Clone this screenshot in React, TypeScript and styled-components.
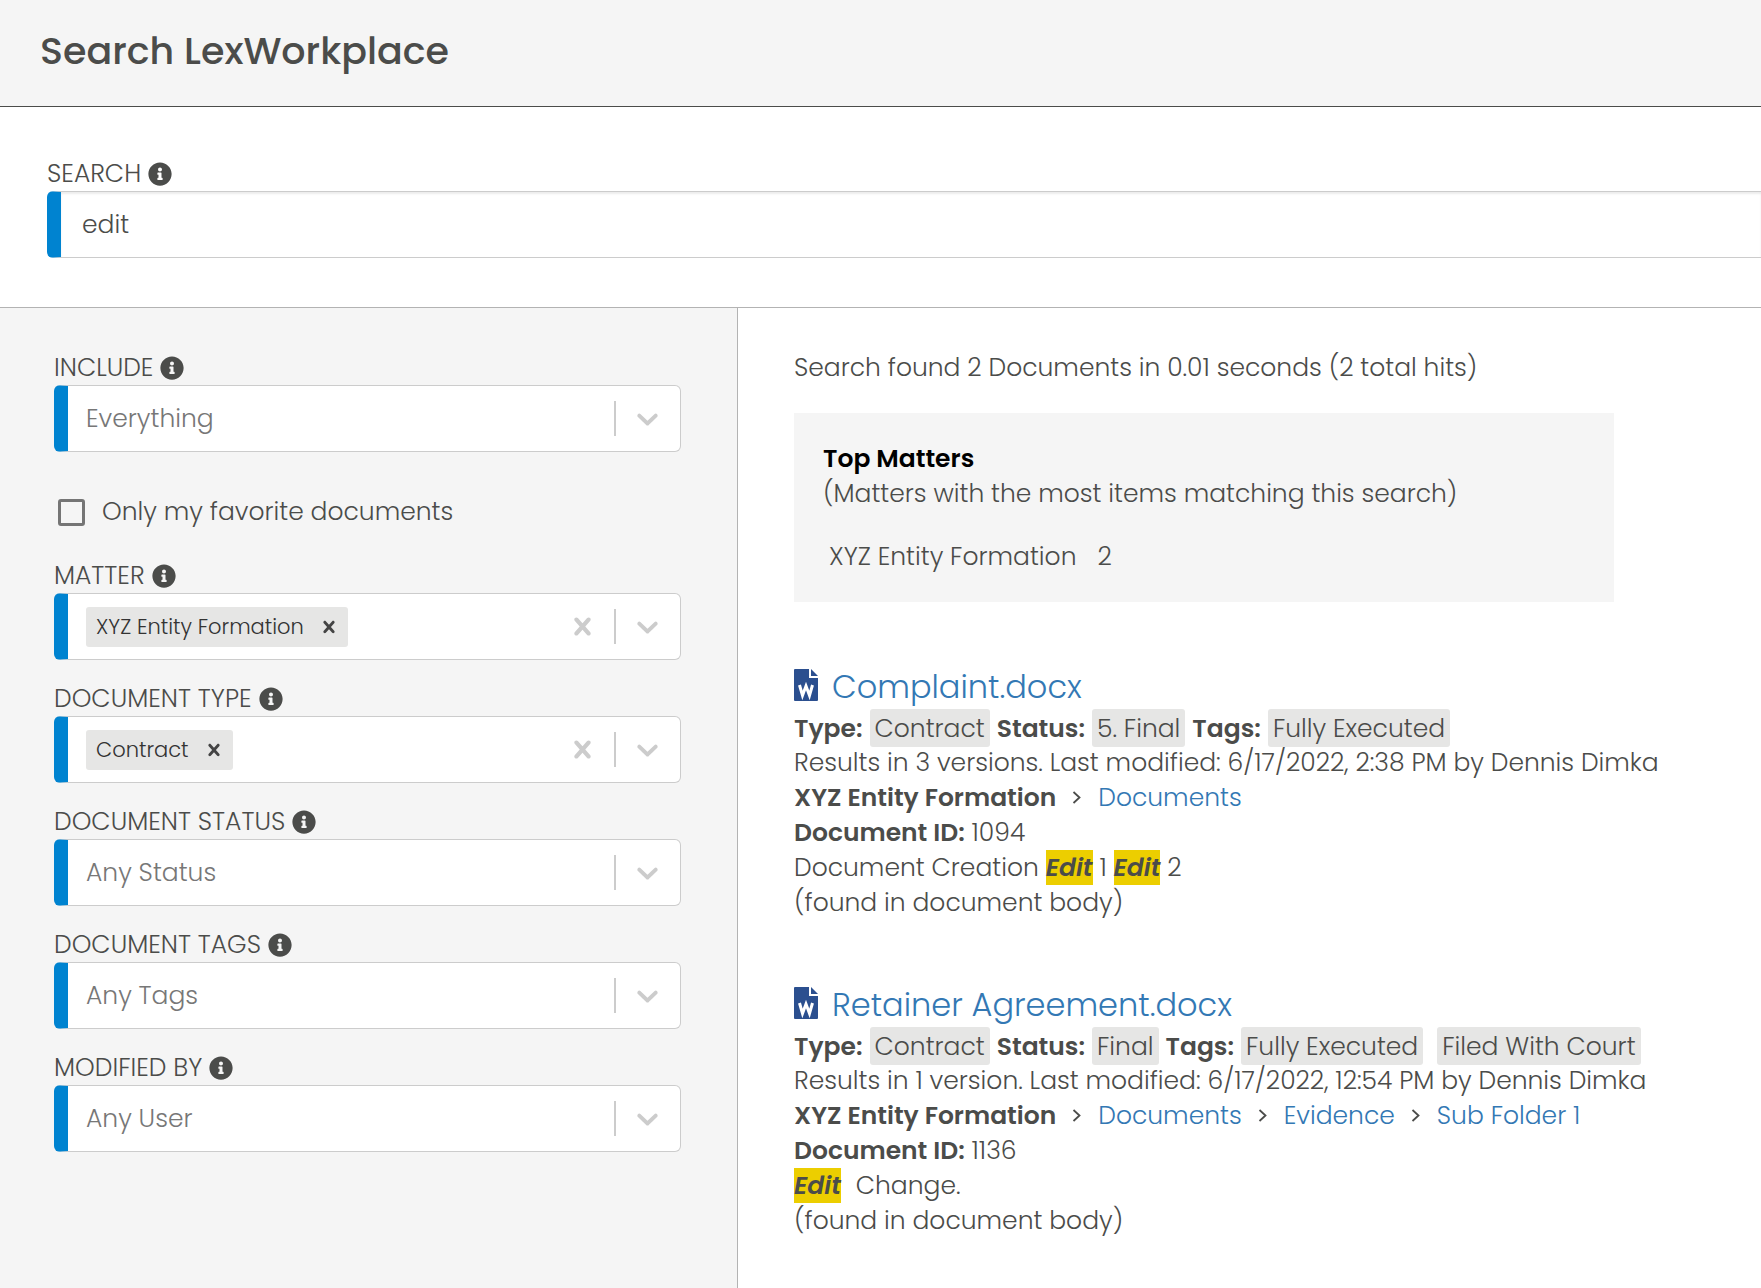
import React, { useState } from 'react';
import styled, { createGlobalStyle } from 'styled-components';
import { FaInfoCircle } from 'react-icons/fa';

const fonts = 'Poppins, Inter, "Open Sans", sans-serif';
const ink = '#4b4c4a';
const blue = '#0083d0';
const line = '#cccccc';
const panel = '#f5f5f5';
const chip = '#e6e6e5';
const link = '#3378b4';

const GlobalStyle = createGlobalStyle`
  *, *::before, *::after { box-sizing: border-box; }
  body {
    margin: 0;
    background: #ffffff;
    color: ${ink};
    font-family: ${fonts};
    font-size: 25px;
    font-weight: 300;
    line-height: 35px;
  }
  button, input, select { font: inherit; color: inherit; }
  b { font-weight: 600; }
`;

const Page = styled.div`
  display: flex;
  flex-direction: column;
  min-height: 100vh;
  overflow-x: hidden;
`;

const Header = styled.header`
  padding: 23px 40px 28px;
  background: ${panel};
  border-bottom: 1px solid ${ink};
`;

const PageTitle = styled.h1`
  margin: 0;
  font-size: 38px;
  line-height: 55px;
  font-weight: 500;
`;

const SearchBar = styled.section`
  padding: 49px 0 49px 47px;
  border-bottom: 1px solid #b3b3b3;
`;

const Label = styled.label`
  display: flex;
  align-items: center;
  gap: 7px;
  height: 35px;
  text-transform: uppercase;

  svg { font-size: 24px; }
`;

const SearchInput = styled.input`
  display: block;
  width: 100%;
  height: 67px;
  padding: 0 21px;
  border: 1px solid ${line};
  border-left: 14px solid ${blue};
  border-right: 0;
  border-radius: 6px 0 0 6px;
  box-shadow: inset 0 2px 2px rgba(0, 0, 0, 0.08);
  background: #ffffff;
  outline: 0;
`;

const Body = styled.div`
  display: grid;
  grid-template-columns: 738px 1fr;
  flex: 1;

  @media (max-width: 1100px) { grid-template-columns: 1fr; }
`;

const Filters = styled.aside`
  padding: 42px 56px 40px 54px;
  background: ${panel};
  border-right: 1px solid #b3b3b3;
`;

const Field = styled.div`
  margin-bottom: 21px;
`;

const Control = styled.div`
  display: grid;
  grid-template-columns: 1fr auto;
  align-items: center;
  height: 67px;
  padding-right: 1px;
  border: 1px solid ${line};
  border-left: 14px solid ${blue};
  border-radius: 6px;
  background: #ffffff;
`;

const Select = styled.select`
  grid-area: 1 / 1 / 2 / 3;
  height: 65px;
  padding: 0 80px 0 18px;
  border: 0;
  outline: 0;
  appearance: none;
  background: transparent;
  color: #777777;
`;

const Indicators = styled.div`
  grid-area: 1 / 2;
  display: flex;
  align-items: center;
  pointer-events: none;

  svg { fill: ${line}; display: block; }
`;

const Divider = styled.span`
  width: 2px;
  height: 35px;
  background: ${line};
`;

const ChevronBox = styled.span`
  padding: 0 14px;
`;

const ClearButton = styled.button`
  padding: 0 14px;
  border: 0;
  background: none;
  cursor: pointer;
  pointer-events: auto;
`;

const Values = styled.div`
  display: flex;
  align-items: center;
  min-width: 0;
  padding-left: 18px;
`;

const ValueChip = styled.span`
  display: flex;
  align-items: center;
  flex: none;
  height: 40px;
  padding: 0 7px 0 10px;
  gap: 13px;
  border-radius: 3px;
  background: ${chip};
  color: #333333;
  font-size: 21px;
`;

const RemoveButton = styled.button`
  display: flex;
  padding: 0;
  border: 0;
  background: none;
  cursor: pointer;

  svg { fill: #444444; }
`;

const ChipInput = styled.input`
  flex: 1;
  min-width: 0;
  border: 0;
  outline: 0;
  background: transparent;
`;

const CheckRow = styled.label`
  display: flex;
  align-items: center;
  gap: 17px;
  margin: 42px 0 29px;
  padding-left: 4px;
`;

const Checkbox = styled.input`
  appearance: none;
  width: 27px;
  height: 27px;
  margin: 2px 0 0;
  border: 3px solid #757575;
  border-radius: 3px;
  background: ${panel};

  &:checked { background: ${blue}; }
`;

const Results = styled.main`
  padding: 42px 40px 40px 56px;
`;

const Summary = styled.p`
  margin: 0 0 28px;
`;

const TopMatters = styled.section`
  max-width: 820px;
  margin-bottom: 62px;
  padding: 28px 29px;
  background: ${panel};
`;

const TopHeading = styled.h2`
  margin: 0;
  font-size: 25px;
  font-weight: 600;
  line-height: 35px;
  color: #000000;
`;

const MatterTable = styled.table`
  margin-top: 28px;
  border-spacing: 0;

  td { padding: 0 15px 0 6px; }
`;

const Result = styled.article`
  margin-bottom: 62px;
`;

const ResultTitle = styled.h3`
  display: flex;
  align-items: center;
  gap: 14px;
  margin: 0;
  font-size: 32px;
  font-weight: 300;
  line-height: 45px;

  svg { margin-bottom: 4px; }
`;

const Link = styled.a`
  color: ${link};
  text-decoration: none;
`;

const MetaRow = styled.div`
  display: flex;
  flex-wrap: wrap;
  align-items: center;
  gap: 7px;
  margin-bottom: -2px;
`;

const Tag = styled.span<{ $spaced?: boolean }>`
  height: 38px;
  margin-left: ${(p) => (p.$spaced ? '7px' : '0')};
  padding: 2px 5px 1px;
  border-radius: 3px;
  background: ${chip};
`;

const Crumbs = styled.nav`
  display: flex;
  flex-wrap: wrap;
  align-items: center;
  gap: 16px;
`;

const Mark = styled.mark`
  display: inline-block;
  background: #ecce00;
  color: inherit;
  font-style: italic;
  font-weight: 600;
`;

const Gap = styled.span`
  padding-left: 8px;
`;

const Cross = ({ size }: { size: number }) => (
  <svg width={size} height={size} viewBox="0 0 20 20" aria-hidden="true">
    <path d="M14.348 14.849c-0.469 0.469-1.229 0.469-1.697 0l-2.651-3.030-2.651 3.029c-0.469 0.469-1.229 0.469-1.697 0-0.469-0.469-0.469-1.229 0-1.697l2.758-3.15-2.759-3.152c-0.469-0.469-0.469-1.228 0-1.697s1.228-0.469 1.697 0l2.652 3.031 2.651-3.031c0.469-0.469 1.228-0.469 1.697 0s0.469 1.229 0 1.697l-2.758 3.152 2.758 3.15c0.469 0.469 0.469 1.229 0 1.698z" />
  </svg>
);

const Chevron = () => (
  <svg width="35" height="35" viewBox="0 0 20 20" aria-hidden="true">
    <path d="M4.516 7.548c0.436-0.446 1.043-0.481 1.576 0l3.908 3.747 3.908-3.747c0.533-0.481 1.141-0.446 1.574 0 0.436 0.445 0.408 1.197 0 1.615-0.406 0.418-4.695 4.502-4.695 4.502-0.217 0.223-0.502 0.335-0.787 0.335s-0.57-0.112-0.789-0.335c0 0-4.287-4.084-4.695-4.502s-0.436-1.17 0-1.615z" />
  </svg>
);

const CrumbArrow = () => (
  <svg width="10" height="14" viewBox="0 0 10 14" aria-hidden="true">
    <path fill="none" stroke={ink} strokeWidth="1.8" d="M1.500 1l6 5.500-6 5.500" />
  </svg>
);

const WordFile = () => (
  <svg width="24" height="32" viewBox="0 0 24 32" aria-hidden="true">
    <path fill="#2b4f8f" d="M1 0h14v9h9v22a1 1 0 0 1-1 1H1a1 1 0 0 1-1-1V1a1 1 0 0 1 1-1z" />
    <path fill="#2b4f8f" d="M17 0l7 7h-7z" />
    <path fill="none" stroke="#ffffff" strokeWidth="3" d="M5.500 16l3 10.500L12 17l3.500 9.500 3-10.500" />
  </svg>
);

type FilterProps = { id: string; label: string };

const SelectField = ({ id, label, value }: FilterProps & { value: string }) => (
  <Field>
    <Label htmlFor={id}>{label} <FaInfoCircle /></Label>
    <Control>
      <Select id={id} defaultValue={value}><option>{value}</option></Select>
      <Indicators><Divider /><ChevronBox><Chevron /></ChevronBox></Indicators>
    </Control>
  </Field>
);

const ChipField = ({ id, label, initial }: FilterProps & { initial: string }) => {
  const [value, setValue] = useState(initial);
  return (
    <Field>
      <Label htmlFor={id}>{label} <FaInfoCircle /></Label>
      <Control>
        <Values>
          {value && (
            <ValueChip>
              {value}
              <RemoveButton aria-label={`Remove ${value}`} onClick={() => setValue('')}><Cross size={24} /></RemoveButton>
            </ValueChip>
          )}
          <ChipInput id={id} />
        </Values>
        <Indicators>
          <ClearButton aria-label={`Clear ${label}`} onClick={() => setValue('')}><Cross size={35} /></ClearButton>
          <Divider />
          <ChevronBox><Chevron /></ChevronBox>
        </Indicators>
      </Control>
    </Field>
  );
};

type Doc = {
  name: string;
  status: string;
  tags: string[];
  summary: string;
  path: string[];
  docId: string;
  excerpt: React.ReactNode;
};

const docs: Doc[] = [
  {
    name: 'Complaint.docx',
    status: '5. Final',
    tags: ['Fully Executed'],
    summary: 'Results in 3 versions. Last modified: 6/17/2022, 2:38 PM by Dennis Dimka',
    path: ['Documents'],
    docId: '1094',
    excerpt: <>Document Creation <Mark>Edit</Mark> 1 <Mark>Edit</Mark> 2</>,
  },
  {
    name: 'Retainer Agreement.docx',
    status: 'Final',
    tags: ['Fully Executed', 'Filed With Court'],
    summary: 'Results in 1 version. Last modified: 6/17/2022, 12:54 PM by Dennis Dimka',
    path: ['Documents', 'Evidence', 'Sub Folder 1'],
    docId: '1136',
    excerpt: <><Mark>Edit</Mark> <Gap>Change.</Gap></>,
  },
];

const ResultItem = ({ doc }: { doc: Doc }) => (
  <Result>
    <ResultTitle><WordFile /><Link href="#">{doc.name}</Link></ResultTitle>
    <MetaRow>
      <b>Type:</b><Tag>Contract</Tag>
      <b>Status:</b><Tag>{doc.status}</Tag>
      <b>Tags:</b>{doc.tags.map((t, i) => <Tag key={t} $spaced={i > 0}>{t}</Tag>)}
    </MetaRow>
    <div>{doc.summary}</div>
    <Crumbs>
      <b>XYZ Entity Formation</b>
      {doc.path.map((p) => (
        <React.Fragment key={p}><CrumbArrow /><Link href="#">{p}</Link></React.Fragment>
      ))}
    </Crumbs>
    <div><b>Document ID:</b> {doc.docId}</div>
    <div>{doc.excerpt}</div>
    <div>(found in document body)</div>
  </Result>
);

export default function App() {
  return (
    <Page>
      <GlobalStyle />
      <Header><PageTitle>Search LexWorkplace</PageTitle></Header>
      <SearchBar>
        <Label htmlFor="search">Search <FaInfoCircle /></Label>
        <SearchInput id="search" defaultValue="edit" />
      </SearchBar>
      <Body>
        <Filters>
          <SelectField id="include" label="Include" value="Everything" />
          <CheckRow><Checkbox type="checkbox" />Only my favorite documents</CheckRow>
          <ChipField id="matter" label="Matter" initial="XYZ Entity Formation" />
          <ChipField id="doc-type" label="Document Type" initial="Contract" />
          <SelectField id="doc-status" label="Document Status" value="Any Status" />
          <SelectField id="doc-tags" label="Document Tags" value="Any Tags" />
          <SelectField id="modified-by" label="Modified By" value="Any User" />
        </Filters>
        <Results>
          <Summary>Search found 2 Documents in 0.01 seconds (2 total hits)</Summary>
          <TopMatters>
            <TopHeading>Top Matters</TopHeading>
            <div>(Matters with the most items matching this search)</div>
            <MatterTable>
              <tbody><tr><td>XYZ Entity Formation</td><td>2</td></tr></tbody>
            </MatterTable>
          </TopMatters>
          {docs.map((d) => <ResultItem key={d.name} doc={d} />)}
        </Results>
      </Body>
    </Page>
  );
}
